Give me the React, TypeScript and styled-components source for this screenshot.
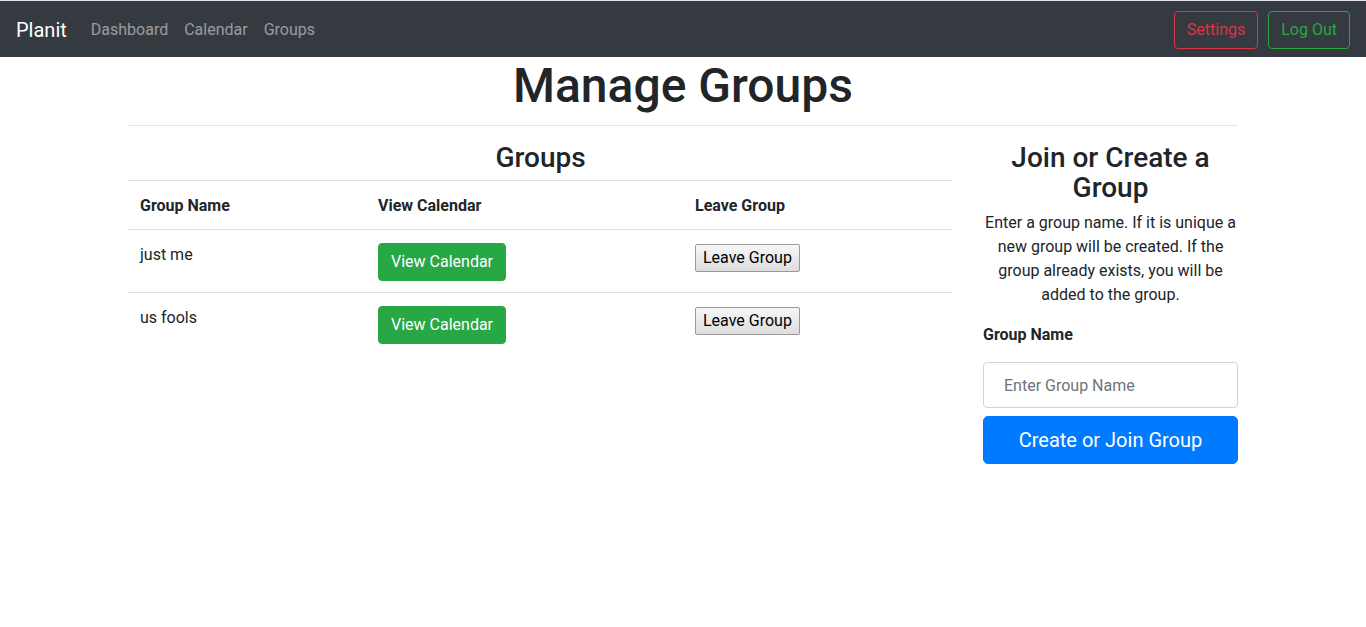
import React from "react";
import styled, { createGlobalStyle } from "styled-components";

const Global = createGlobalStyle`
  * { box-sizing: border-box; }
  body {
    margin: 0;
    font-family: Roboto, "Liberation Sans", sans-serif;
    font-size: 16px;
    line-height: 1.5;
    color: #212529;
    background: #fff;
  }
`;

const Navbar = styled.nav`
  display: flex;
  align-items: center;
  height: 57px;
  padding: 2px 16px 0;
  background: #343a40;
  border-top: 1px solid #e4e4ee;
`;

const Brand = styled.a`
  font-size: 20px;
  color: #fff;
  margin-right: 16px;
  line-height: 30px;
  padding: 5px 0;
`;

const NavLinks = styled.div`
  display: flex;
  flex: 1;
`;

const NavLink = styled.a`
  color: rgba(255, 255, 255, 0.5);
  padding: 8px 8px;
  font-size: 16px;
`;

const NavRight = styled.div`
  display: flex;
  gap: 10px;
`;

const OutlineBtn = styled.button<{ $color: string }>`
  font-family: inherit;
  font-size: 16px;
  line-height: 24px;
  padding: 6px 12px;
  background: transparent;
  color: ${(p) => p.$color};
  border: 1px solid ${(p) => p.$color};
  border-radius: 4px;
`;

const Container = styled.div`
  width: 1140px;
  margin: 0 auto;
  padding: 0 15px;
`;

const Title = styled.h1`
  margin: 0;
  text-align: center;
  font-size: 48px;
  font-weight: 500;
  line-height: 57px;
`;

const Rule = styled.hr`
  margin: 11px 0 0;
  border: 0;
  border-top: 1px solid rgba(0, 0, 0, 0.1);
`;

const Row = styled.div`
  display: flex;
  margin: 0 -15px;
`;

const Col = styled.div<{ $span: number }>`
  width: ${(p) => (p.$span / 12) * 100}%;
  padding: 0 15px;
`;

const SectionTitle = styled.h3`
  margin: 17px 0 0;
  text-align: center;
  font-size: 28px;
  font-weight: 500;
  line-height: 30px;
`;

const Table = styled.table`
  width: 100%;
  border-collapse: collapse;
  margin-top: 7px;
`;

const Th = styled.th<{ $w: number }>`
  width: ${(p) => p.$w}px;
  text-align: left;
  padding: 13px 12px 11px;
  font-weight: 700;
  border-top: 1px solid #dee2e6;
  border-bottom: 1px solid #dee2e6;
  vertical-align: bottom;
`;

const Td = styled.td`
  padding: 13px 12px 11px;
  vertical-align: top;
  border-top: 1px solid #dee2e6;
`;

const SuccessBtn = styled.button`
  font-family: inherit;
  font-size: 16px;
  line-height: 24px;
  padding: 6px 12px;
  background: #28a745;
  color: #fff;
  border: 1px solid #28a745;
  border-radius: 4px;
`;

const DefaultBtn = styled.button`
  font-family: inherit;
  font-size: 16px;
  line-height: 20px;
  padding: 3px 7px;
  margin-top: 1px;
  color: #000;
  background: linear-gradient(#f7f7f7, #dddddd);
  border: 1px solid #9a9a9a;
  border-radius: 2px;
`;

const Para = styled.p`
  margin: 8px 0 16px;
  text-align: center;
`;

const Label = styled.label`
  display: block;
  font-weight: 700;
  margin-bottom: 15px;
`;

const Input = styled.input`
  display: block;
  width: 100%;
  height: 46px;
  padding: 8px 20px;
  font-family: inherit;
  font-size: 16px;
  color: #495057;
  border: 1px solid #ced4da;
  border-radius: 4px;
  &::placeholder { color: #6c757d; }
`;

const PrimaryBtn = styled.button`
  display: block;
  width: 100%;
  margin-top: 8px;
  font-family: inherit;
  font-size: 20px;
  line-height: 30px;
  padding: 8px 16px;
  background: #007bff;
  color: #fff;
  border: 1px solid #007bff;
  border-radius: 5px;
`;

const groups = ["just me", "us fools"];

export default function App() {
  return (
    <>
      <Global />
      <Navbar>
        <Brand>Planit</Brand>
        <NavLinks>
          <NavLink>Dashboard</NavLink>
          <NavLink>Calendar</NavLink>
          <NavLink>Groups</NavLink>
        </NavLinks>
        <NavRight>
          <OutlineBtn $color="#dc3545">Settings</OutlineBtn>
          <OutlineBtn $color="#28a745">Log Out</OutlineBtn>
        </NavRight>
      </Navbar>
      <Container>
        <Title>Manage Groups</Title>
        <Rule />
        <Row>
          <Col $span={9}>
            <SectionTitle>Groups</SectionTitle>
            <Table>
              <thead>
                <tr>
                  <Th $w={238}>Group Name</Th>
                  <Th $w={317}>View Calendar</Th>
                  <Th $w={270}>Leave Group</Th>
                </tr>
              </thead>
              <tbody>
                {groups.map((g) => (
                  <tr key={g}>
                    <Td>{g}</Td>
                    <Td>
                      <SuccessBtn>View Calendar</SuccessBtn>
                    </Td>
                    <Td>
                      <DefaultBtn>Leave Group</DefaultBtn>
                    </Td>
                  </tr>
                ))}
              </tbody>
            </Table>
          </Col>
          <Col $span={3}>
            <SectionTitle>Join or Create a Group</SectionTitle>
            <Para>
              Enter a group name. If it is unique a new group will be created. If the group already
              exists, you will be added to the group.
            </Para>
            <Label>Group Name</Label>
            <Input placeholder="Enter Group Name" />
            <PrimaryBtn>Create or Join Group</PrimaryBtn>
          </Col>
        </Row>
      </Container>
    </>
  );
}
